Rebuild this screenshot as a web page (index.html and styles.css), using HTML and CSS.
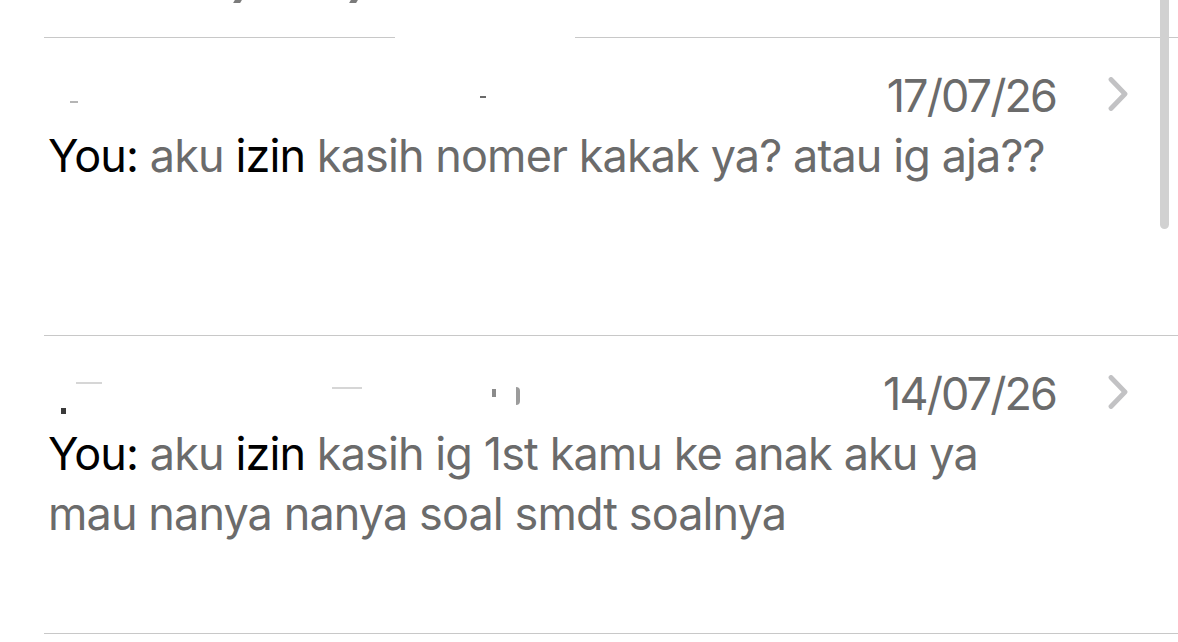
FILE: index.html
```html
<!DOCTYPE html>
<html lang="id">
<head>
<meta charset="utf-8">
<title>Messages</title>
<link rel="stylesheet" href="styles.css">
</head>
<body>
<div class="screen">
  <div class="prev-row">
    <span class="mark mark-top1"></span>
    <span class="mark mark-top2"></span>
  </div>
  <div class="sep sep-top"></div>

  <div class="row">
    <div class="head">
      <div class="name">
        <span class="mark mark-a"></span>
        <span class="mark mark-b"></span>
      </div>
      <div class="date">17/07/26</div>
      <svg class="chev" viewBox="0 0 20 34" aria-hidden="true"><path d="M3 2.5 L17 17 L3 31.5"/></svg>
    </div>
    <div class="msg"><span class="hl">You: </span><span>aku </span><span class="hl">izin </span><span>kasih nomer kakak ya? atau ig aja??</span></div>
  </div>
  <div class="sep"></div>

  <div class="row">
    <div class="head">
      <div class="name">
        <span class="mark mark-dot"></span>
        <span class="mark mark-c"></span>
        <span class="mark mark-d"></span>
        <span class="mark mark-e"></span>
        <span class="mark mark-f"></span>
      </div>
      <div class="date">14/07/26</div>
      <svg class="chev" viewBox="0 0 20 34" aria-hidden="true"><path d="M3 2.5 L17 17 L3 31.5"/></svg>
    </div>
    <div class="msg"><span class="hl">You: </span><span>aku </span><span class="hl">izin </span><span>kasih ig 1st kamu ke anak aku ya </span><span>mau nanya nanya soal smdt soalnya</span></div>
  </div>
  <div class="sep"></div>

  <div class="scrollbar"></div>
</div>
</body>
</html>
```

FILE: styles.css
```css
html, body {
  margin: 0;
  padding: 0;
  background: #ffffff;
}

.screen {
  position: relative;
  width: 1178px;
  height: 642px;
  overflow: hidden;
  font-family: "Inter", "Roboto", "Liberation Sans", sans-serif;
  font-size: 45px;
  line-height: 60px;
  color: #6b6b6b;
  letter-spacing: -0.9px;
}

.prev-row {
  height: 37px;
  display: flex;
  align-items: flex-start;
}

.sep {
  height: 1px;
  margin-left: 44px;
  background: #c8c8c8;
}

.sep-top {
  background: linear-gradient(to right, #c8c8c8 0, #c8c8c8 351px, transparent 351px, transparent 531px, #c8c8c8 531px);
}

.row {
  padding: 28px 0 29px 48px;
  height: 240px;
}

.head {
  display: flex;
  align-items: center;
  height: 60px;
}

.name {
  flex: 1;
  display: flex;
  align-items: center;
  height: 60px;
}

.date {
  color: #6b6b6b;
  letter-spacing: -1.9px;
  margin-right: 2px;
}

.chev {
  width: 20px;
  height: 34px;
  margin-left: 50px;
  margin-right: 50px;
  margin-top: -4px;
}

.chev path {
  fill: none;
  stroke: #c2c2c4;
  stroke-width: 4.8;
  stroke-linecap: round;
  stroke-linejoin: round;
}

.msg {
  width: 1000px;
  max-height: 180px;
  overflow: hidden;
}

.hl {
  color: #000000;
}

.mark {
  display: inline-block;
  background: #5a5a5a;
  flex: none;
}

.mark-top1 { width: 7px; height: 3px; margin-left: 234px; opacity: 0.8; transform: skewX(-30deg); }
.mark-top2 { width: 7px; height: 3px; margin-left: 109px; opacity: 0.8; transform: skewX(-30deg); }

.mark-a { width: 8px; height: 2px; margin-left: 22px; margin-top: 12px; opacity: 0.45; }
.mark-b { width: 6px; height: 2px; margin-left: 402px; margin-top: 2px; opacity: 0.9; }

.mark-dot { width: 5px; height: 6px; margin-left: 13px; margin-top: 34px; background: #3a3a3a; }
.mark-c { width: 26px; height: 2px; margin-left: 10px; margin-top: -22px; opacity: 0.25; }
.mark-d { width: 30px; height: 2px; margin-left: 230px; margin-top: -12px; opacity: 0.25; }
.mark-e { width: 4px; height: 8px; margin-left: 130px; margin-top: -2px; opacity: 0.7; }
.mark-f { width: 4px; height: 18px; margin-left: 20px; margin-top: 4px; opacity: 0.6; border-radius: 0 8px 8px 0; }

.scrollbar {
  position: absolute;
  left: 1160px;
  top: 0;
  width: 9px;
  height: 229px;
  border-radius: 0 0 5px 5px;
  background: #d1d1d1;
}
```
